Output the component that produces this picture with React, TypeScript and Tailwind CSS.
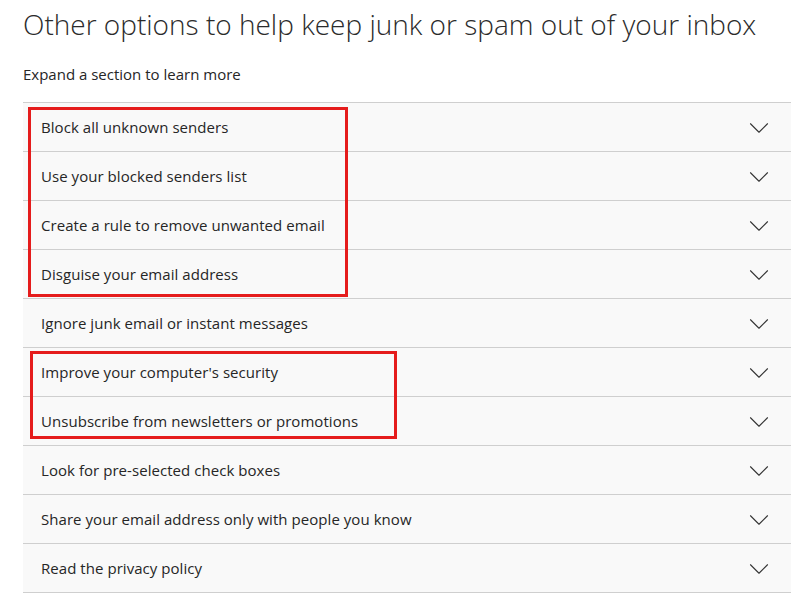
import { ChevronDown } from 'lucide-react';

const sections = [
  'Block all unknown senders',
  'Use your blocked senders list',
  'Create a rule to remove unwanted email',
  'Disguise your email address',
  'Ignore junk email or instant messages',
  "Improve your computer's security",
  'Unsubscribe from newsletters or promotions',
  'Look for pre-selected check boxes',
  'Share your email address only with people you know',
  'Read the privacy policy',
];

export default function App() {
  return (
    <div
      className="min-h-[599px] w-[798px] bg-white pl-[23px] pr-[7px] text-[#262626]"
      style={{ fontFamily: '"Open Sans", "Noto Sans", "Liberation Sans", sans-serif' }}
    >
      <h1 className="whitespace-nowrap pt-[2px] text-[28px] font-light leading-[44px] text-[#2b2b2b]">
        Other options to help keep junk or spam out of your inbox
      </h1>
      <p className="mt-[17px] text-[15px] leading-[22px]">Expand a section to learn more</p>

      <div className="relative mt-[17px]">
        <ul className="border-t border-[#cfcfcf]">
          {sections.map((title) => (
            <li
              key={title}
              className="flex h-[49px] items-center justify-between border-b border-[#cfcfcf] bg-[#f9f9f9] pl-[18px] pr-[15px]"
            >
              <span className="text-[15px] tracking-[0.05px]">{title}</span>
              <ChevronDown className="mt-[1px] h-[34px] w-[34px] text-[#333]" strokeWidth={0.75} />
            </li>
          ))}
        </ul>

        {/* highlight boxes drawn over the list */}
        <div className="pointer-events-none absolute left-[5px] top-[5px] h-[190px] w-[320px] border-[3px] border-[#e51c1c]" />
        <div className="pointer-events-none absolute left-[7px] top-[249px] h-[88px] w-[367px] border-[3px] border-[#e51c1c]" />
      </div>
    </div>
  );
}
